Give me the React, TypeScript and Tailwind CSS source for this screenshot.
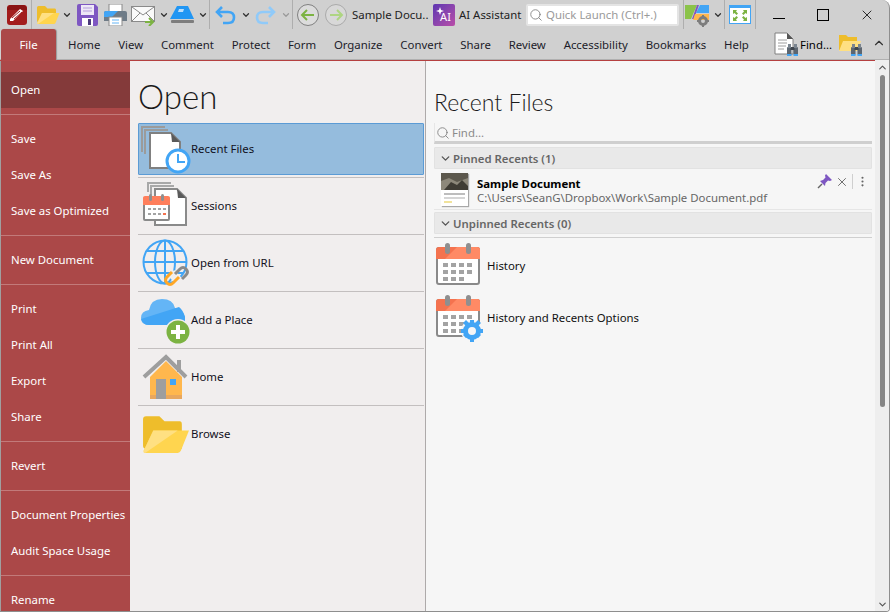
import { ReactNode } from "react";
import { ChevronDown, ChevronUp, Search, X, EllipsisVertical } from "lucide-react";

const tabs = ["Home", "View", "Comment", "Protect", "Form", "Organize", "Convert", "Share", "Review", "Accessibility", "Bookmarks", "Help"];

const groups = [
  ["Open"],
  ["Save", "Save As", "Save as Optimized"],
  ["New Document"],
  ["Print", "Print All", "Export", "Share"],
  ["Revert"],
  ["Document Properties", "Audit Space Usage"],
  ["Rename"],
];

const Sep = ({ ml = 0 }: { ml?: number }) => (
  <div className="w-px h-[29px] bg-[#aeaeae] shrink-0" style={{ marginLeft: ml }} />
);

const Drop = ({ ml, light }: { ml: number; light?: boolean }) => (
  <ChevronDown
    size={10}
    strokeWidth={3}
    className={`shrink-0 ${light ? "text-[#9a9a9a]" : "text-[#333]"}`}
    style={{ marginLeft: ml }}
  />
);

const Ico = ({ w, h, ml = 0, children }: { w: number; h: number; ml?: number; children: ReactNode }) => (
  <svg width={w} height={h} viewBox={`0 0 ${w} ${h}`} className="shrink-0 block" style={{ marginLeft: ml }}>
    {children}
  </svg>
);

const FolderYellow = ({ w = 24, h = 20, ml = 0 }: { w?: number; h?: number; ml?: number }) => (
  <svg width={w} height={h} viewBox="0 0 24 20" className="shrink-0 block" style={{ marginLeft: ml }}>
    <path d="M1 2.500Q1 1 2.500 1H9l2.500 2.500H19Q20 3.500 20 5V17H2.500Q1 17 1 15.500Z" fill="#eebd2b" />
    <path d="M6 8H23.500L19.500 18Q19 19 18 19H2Q1 19 1.300 18Z" fill="#ffd54f" />
    <path d="M6 8H18L2 19Q1 19 1.300 18Z" fill="#ffe082" />
  </svg>
);

const Calendar = ({ gear }: { gear?: boolean }) => (
  <svg width="48" height="48" viewBox="0 0 48 48" className="block shrink-0">
    <rect x="2" y="6" width="42" height="36" rx="2" fill="#fff" stroke="#8a8a8a" strokeWidth="2" />
    <path d="M1 17V8Q1 5 4 5H42Q45 5 45 8V17Z" fill="#f4734f" />
    <path d="M22 5H42Q45 5 45 8V17H10Z" fill="#ff8a65" />
    <rect x="10" y="1" width="5" height="11" rx="2.500" fill="#8f8f8f" />
    <rect x="31" y="1" width="5" height="11" rx="2.500" fill="#8f8f8f" />
    <path
      d="M8 21h5v4H8zM16 21h5v4h-5zM24 21h5v4h-5zM32 21h5v4h-5zM8 28h5v4H8zM16 28h5v4h-5zM24 28h5v4h-5zM32 28h5v4h-5zM8 35h5v4H8zM16 35h5v4h-5zM24 35h5v4h-5z"
      fill="#a3a3a3"
    />
    {gear && (
      <g>
        <circle cx="37" cy="37" r="11" fill="#f6f6f6" />
        <circle cx="37" cy="37" r="6.500" fill="none" stroke="#42a5f5" strokeWidth="5" />
        <path
          d="M35 26h4v4h-4zM35 44h4v4h-4zM26 35h4v4h-4zM44 35h4v4h-4zM28 29l3-3 3 3-3 3zM40 41l3-3 3 3-3 3zM40 29l3-3 3 3-3 3zM28 41l3-3 3 3-3 3z"
          fill="#42a5f5"
        />
      </g>
    )}
  </svg>
);

const Binoculars = ({ x, y }: { x: number; y: number }) => (
  <g transform={`translate(${x} ${y})`}>
    <rect x="0" y="3" width="4.500" height="8" rx="1" fill="#5d6670" />
    <rect x="6.500" y="3" width="4.500" height="8" rx="1" fill="#5d6670" />
    <rect x="3.500" y="3" width="4" height="3" fill="#3f464e" />
    <rect x="1" y="0" width="3" height="4" fill="#7b8590" />
    <rect x="7" y="0" width="3" height="4" fill="#7b8590" />
    <rect x="0" y="10" width="4.500" height="2" fill="#42a5f5" />
    <rect x="6.500" y="10" width="4.500" height="2" fill="#42a5f5" />
  </g>
);

function Toolbar() {
  return (
    <div className="h-[29px] flex items-center shrink-0 pl-[7px] text-[#222]">
      {/* app logo */}
      <Ico w={20} h={20}>
        <rect x="0" y="0" width="20" height="20" rx="3" fill="#a31d1d" />
        <path d="M0 5Q0 0 5 0H15Q20 0 20 5Z" fill="#8a1414" />
        <path d="M3 14L13 4l3 2L6 16H3Z" fill="#fff" />
        <path d="M5 13l8-7M7 14l8-7M3 17h12" stroke="#a31d1d" strokeWidth="1" fill="none" />
      </Ico>
      <Sep ml={4} />
      <FolderYellow ml={4} />
      <Drop ml={2} />
      {/* save */}
      <Ico w={23} h={22} ml={4}>
        <path d="M1 2Q1 0 3 0H19L22 3V20Q22 22 20 22H3Q1 22 1 20Z" fill="#7e57c2" />
        <rect x="5" y="1" width="13" height="10" fill="#ede7f6" />
        <path d="M7 4h9M7 7h9" stroke="#b39ddb" strokeWidth="1" />
        <rect x="6" y="14" width="11" height="8" fill="#fff" />
        <rect x="12" y="15" width="3" height="6" fill="#4a3a7a" />
      </Ico>
      {/* print */}
      <Ico w={23} h={22} ml={5}>
        <rect x="5" y="0" width="13" height="8" fill="#fff" stroke="#888" />
        <path d="M2 7H21Q23 7 23 9V17H0V9Q0 7 2 7Z" fill="#6e7b87" />
        <path d="M2 7H14L8 13H0V9Q0 7 2 7Z" fill="#42a5f5" />
        <rect x="5" y="13" width="13" height="9" fill="#fff" stroke="#888" />
        <path d="M8 16h7M8 19h7" stroke="#64b5f6" strokeWidth="1" />
      </Ico>
      {/* email */}
      <Ico w={26} h={22} ml={4}>
        <rect x="0.500" y="2.500" width="23" height="15" fill="#fafafa" stroke="#8a8a8a" />
        <path d="M1 3l11 8 11-8M1 17l8-8M23 17l-8-8" stroke="#8a8a8a" fill="none" />
        <path d="M14 18h7M18 14l4 4-4 4" stroke="#7cb342" strokeWidth="2" fill="none" />
      </Ico>
      <Drop ml={2} />
      {/* stamp */}
      <Ico w={25} h={18} ml={1}>
        <path d="M7 0H18L24 13H0Z" fill="#2196f3" />
        <path d="M9 3H14L13 6H8Z" fill="#bbdefb" />
        <rect x="1" y="14" width="23" height="3" rx="1" fill="#7d7d7d" />
      </Ico>
      <Drop ml={3} />
      <Sep ml={1} />
      {/* undo */}
      <Ico w={21} h={20} ml={5}>
        <path d="M7 2L2 7l5 5" stroke="#42a5f5" strokeWidth="2.600" fill="none" />
        <path d="M2 7H13Q19 7 19 12.500T13 18H8" stroke="#42a5f5" strokeWidth="2.600" fill="none" />
      </Ico>
      <Drop ml={5} />
      {/* redo */}
      <Ico w={21} h={20} ml={4}>
        <path d="M14 2l5 5-5 5" stroke="#90caf9" strokeWidth="2.600" fill="none" />
        <path d="M19 7H8Q2 7 2 12.500T8 18H13" stroke="#90caf9" strokeWidth="2.600" fill="none" />
      </Ico>
      <Drop ml={5} light />
      <Sep ml={1} />
      {/* back / forward */}
      <Ico w={22} h={22} ml={4}>
        <circle cx="11" cy="11" r="10.500" fill="#dcdcdc" stroke="#808080" />
        <path d="M17 11H6M10 6l-5 5 5 5" stroke="#7cb342" strokeWidth="2" fill="none" />
      </Ico>
      <Ico w={22} h={22} ml={6}>
        <circle cx="11" cy="11" r="10.500" fill="#d8d8d8" stroke="#aaa" />
        <path d="M5 11h11M12 6l5 5-5 5" stroke="#aed581" strokeWidth="2" fill="none" />
      </Ico>
      <span className="ml-[5px] w-[76px] shrink-0 whitespace-nowrap">Sample Docu..</span>
      {/* AI */}
      <div className="ml-[5px] w-[22px] h-[22px] shrink-0 rounded-[2px] bg-gradient-to-br from-[#5e35b1] to-[#ba4ca8] text-white text-[11px] leading-none flex items-center justify-center pt-[3px] pl-[3px] relative">
        AI
        <svg width="8" height="8" viewBox="0 0 8 8" className="absolute left-[3px] top-[3px] block">
          <path d="M4 0L5 3 8 4 5 5 4 8 3 5 0 4 3 3Z" fill="#fff" />
        </svg>
      </div>
      <span className="ml-[4px] w-[62px] shrink-0 whitespace-nowrap">AI Assistant</span>
      <div className="ml-[5px] w-[153px] h-[22px] shrink-0 bg-white border-2 border-[#e4e4e4] rounded-[2px] flex items-center pl-[1px] text-[#9a9a9a] whitespace-nowrap">
        <Search size={14} strokeWidth={1.500} className="text-[#808080] shrink-0" />
        <span className="ml-[3px]">Quick Launch (Ctrl+.)</span>
      </div>
      <Sep ml={4} />
      {/* manage tools */}
      <Ico w={26} h={24} ml={1}>
        <path d="M0 2H12L6 16H0Z" fill="#8bc34a" />
        <path d="M12 2h2L9 16H7Z" fill="#7e57c2" />
        <path d="M15 2H24V10H11Z" fill="#42a5f5" />
        <path d="M10 11H24V17H8Z" fill="#ffb74d" />
        <circle cx="18" cy="18" r="3.500" fill="none" stroke="#7d7d7d" strokeWidth="3" />
        <path d="M17 12h2v3h-2zM17 21h2v3h-2zM12 17h3v2h-3zM21 17h3v2h-3z" fill="#7d7d7d" />
      </Ico>
      <Drop ml={2} />
      <Sep ml={1} />
      {/* full screen */}
      <Ico w={22} h={19} ml={4}>
        <rect x="0.500" y="0.500" width="21" height="18" fill="#fff" stroke="#42a5f5" />
        <rect x="0" y="0" width="22" height="3" fill="#42a5f5" />
        <path d="M4 5h4l-1 1.500 2 2-1.500 1.500-2-2L4 9zM18 5h-4l1 1.500-2 2 1.500 1.500 2-2L18 9zM4 16h4l-1-1.500 2-2-1.500-1.500-2 2L4 12zM18 16h-4l1-1.500-2-2 1.500-1.500 2 2L18 12z" fill="#7cb342" />
      </Ico>
      <Sep ml={4} />
      {/* window buttons */}
      <div className="ml-[17px] w-[12px] h-px bg-black mt-[7px] shrink-0" />
      <div className="ml-[32px] w-[12px] h-[12px] border border-black shrink-0 mt-[1px]" />
      <X size={16} strokeWidth={1.200} className="ml-[30px] shrink-0 text-black" />
    </div>
  );
}

function TabRow() {
  return (
    <div className="h-[31px] flex shrink-0 pl-px border-b border-[#b0b0b0]">
      <div className="w-[55px] shrink-0 h-[31px] bg-[#ab4848] text-white rounded-t-[3px] flex items-center justify-center shadow-[1px_0_1px_#9a9a9a] z-10 pt-px">
        File
      </div>
      <div className="flex items-center gap-[17.8px] ml-[12px] pt-[2px] text-[#1c1c2a] whitespace-nowrap">
        {tabs.map((t) => (
          <span key={t}>{t}</span>
        ))}
      </div>
      {/* find tools */}
      <div className="flex items-center ml-auto pr-[3px] whitespace-nowrap">
        <Ico w={24} h={25}>
          <path d="M1 1H13L19 7V22H1Z" fill="#fff" stroke="#808080" />
          <path d="M13 1L19 7H13Z" fill="#555" />
          <path d="M4 8h9M4 11h9M4 14h8M4 17h6" stroke="#9e9e9e" strokeWidth="1" />
          <Binoculars x={13} y={12} />
        </Ico>
        <span className="ml-[2px] w-[33px] pt-[2px]">Find...</span>
        <svg width="24" height="25" viewBox="0 0 24 25" className="ml-[5px] shrink-0 block">
          <path d="M1 3H8L10 5H19V18H1Z" fill="#eebd2b" />
          <path d="M5 9H23L19 19H1Z" fill="#ffe082" />
          <Binoculars x={13} y={12} />
        </svg>
        <ChevronUp size={14} strokeWidth={2} className="ml-[10px] mb-[2px] text-[#333]" />
      </div>
    </div>
  );
}

function Sidebar() {
  return (
    <div className="w-[130px] shrink-0 bg-[#ab4848] text-white pt-[11px] overflow-hidden border-l border-[#a0a0a0]">
      {groups.map((g, i) => (
        <div key={i}>
          {i > 0 && <div className="h-px bg-[#c27a7a] my-[6px]" />}
          {g.map((item) => (
            <div
              key={item}
              className={`h-[36px] flex items-center pl-[10px] whitespace-nowrap ${item === "Open" ? "bg-[#843a3a]" : ""}`}
            >
              {item}
            </div>
          ))}
        </div>
      ))}
    </div>
  );
}

const openItems: { label: string; icon: ReactNode; active?: boolean }[] = [
  {
    label: "Recent Files",
    active: true,
    icon: (
      <svg width="50" height="50" viewBox="0 0 50 50" className="block">
        <path d="M1 28V3H24M4 30V6H27" stroke="#9b9b9b" strokeWidth="2" fill="none" />
        <path d="M9 9H30L39 18V44H9Z" fill="#fff" stroke="#808080" strokeWidth="2" />
        <path d="M30 9L39 18H31Z" fill="#5a5a5a" />
        <circle cx="37" cy="37" r="11" fill="#fff" stroke="#42a5f5" strokeWidth="3" />
        <path d="M37 30V38H44" stroke="#42a5f5" strokeWidth="2" fill="none" />
      </svg>
    ),
  },
  {
    label: "Sessions",
    icon: (
      <svg width="50" height="50" viewBox="0 0 50 50" className="block">
        <path d="M7 11V2H30M10 14V5H33" stroke="#a8a8a8" strokeWidth="2" fill="none" />
        <path d="M14 8H36L45 17V44H14Z" fill="#fff" stroke="#8a8a8a" strokeWidth="2" />
        <path d="M36 8L45 17H37Z" fill="#5a5a5a" />
        <rect x="3" y="17" width="25" height="22" rx="1" fill="#fff" stroke="#8a8a8a" strokeWidth="2" />
        <path d="M2 24V17Q2 15 4 15H27Q29 15 29 17V24Z" fill="#ff7f5c" />
        <rect x="8" y="13" width="3" height="7" rx="1.500" fill="#8f8f8f" />
        <rect x="20" y="13" width="3" height="7" rx="1.500" fill="#8f8f8f" />
        <path d="M7 27h3v2H7zM12 27h3v2h-3zM17 27h3v2h-3zM22 27h3v2h-3zM7 32h3v2H7zM12 32h3v2h-3zM17 32h3v2h-3z" fill="#a3a3a3" />
        <rect x="22" y="32" width="3" height="2" fill="#f4734f" />
      </svg>
    ),
  },
  {
    label: "Open from URL",
    icon: (
      <svg width="50" height="50" viewBox="0 0 50 50" className="block">
        <g stroke="#42a5f5" strokeWidth="2" fill="none">
          <circle cx="24" cy="24" r="21.500" />
          <ellipse cx="24" cy="24" rx="10" ry="21.500" />
          <path d="M24 2.500V45.500M3 24H45M6 13H42M6 35H42" />
        </g>
        <path d="M31 42L37 36" stroke="#f1eeee" strokeWidth="11" />
        <path d="M34 36l5-5q3-3 6 0t0 6l-4 4" stroke="#8a8a8a" strokeWidth="3" fill="none" />
        <path d="M38 39l-6 6q-3 3-6 0t0-6l5-5" stroke="#ffa726" strokeWidth="3" fill="none" />
      </svg>
    ),
  },
  {
    label: "Add a Place",
    icon: (
      <svg width="50" height="50" viewBox="0 0 50 50" className="block">
        <path d="M8 30Q0 30 0 23T8 15Q10 4 21 4T34 13Q42 14 44 22V30Z" fill="#64b5f6" />
        <path d="M0 24L38 12Q42 15 44 22V30H8Q2 30 0 24Z" fill="#42a5f5" />
        <circle cx="37" cy="37" r="13" fill="#f1eeee" />
        <circle cx="37" cy="37" r="11.500" fill="#7cb342" />
        <path d="M37 30V44M30 37H44" stroke="#fff" strokeWidth="4" />
      </svg>
    ),
  },
  {
    label: "Home",
    icon: (
      <svg width="50" height="50" viewBox="0 0 50 50" className="block">
        <path d="M9 25L25 9L41 25V46Q41 47 40 47H10Q9 47 9 46Z" fill="#ffb74d" />
        <rect x="9" y="43" width="32" height="4" fill="#e8a75e" />
        <path d="M3 25L25 5L45 25" stroke="#9e9e9e" strokeWidth="4" fill="none" />
        <rect x="36" y="8" width="4" height="12" fill="#9e9e9e" />
        <rect x="15" y="27" width="10" height="20" fill="#9e9e9e" />
        <rect x="29" y="27" width="6" height="6" fill="#42a5f5" />
      </svg>
    ),
  },
  {
    label: "Browse",
    icon: <FolderYellow w={49} h={41} />,
  },
];

function OpenPanel() {
  return (
    <div className="w-[296px] shrink-0 bg-[#f1eeee] border-r border-[#aeaaaa] pl-[8px] pr-px text-[#111122]">
      <h1 className="h-[62px] text-[33px] leading-[48px] pt-[11px] font-light text-[#1a1a1a] font-['Lato',sans-serif]">
        Open
      </h1>
      {openItems.map((it, i) => (
        <div key={it.label}>
          {i > 0 && <div className="h-px bg-[#c3bfbf] my-[2px]" />}
          <div
            className={`h-[52px] flex items-center border rounded-[1px] ${
              it.active ? "bg-[#95bcdd] border-[#5b9bd5]" : "border-transparent"
            }`}
          >
            <div className="w-[52px] h-[50px] shrink-0 flex items-center justify-center pl-[1px]">{it.icon}</div>
            <span>{it.label}</span>
          </div>
        </div>
      ))}
    </div>
  );
}

function RecentHeader({ label }: { label: string }) {
  return (
    <div className="h-[22px] bg-[#e9e9e9] border border-[#e2e2e2] rounded-[1px] flex items-center pl-[4px] pt-px font-semibold text-[#666]">
      <ChevronDown size={13} strokeWidth={2.500} className="text-[#555] mr-[1px]" />
      {label}
    </div>
  );
}

function RecentPanel() {
  return (
    <div className="flex-1 bg-[#f6f6f6] flex min-w-0">
      <div className="w-[438px] ml-[8px] shrink-0 text-[#111]">
        <h2 className="h-[62px] text-[23px] leading-[32px] pt-[25px] font-light text-[#1a1a1a] font-['Lato',sans-serif]">
          Recent Files
        </h2>
        <div className="h-[21px] flex items-center pl-px pt-[2px] border-l border-[#e6e6e6] border-b-[3px] border-b-[#cfcfcf] text-[#8a8a8a] mb-[3px]">
          <Search size={14} strokeWidth={1.500} className="text-[#808080]" />
          <span className="ml-[2px]">Find...</span>
        </div>
        <RecentHeader label="Pinned Recents (1)" />
        <div className="h-[40px] mt-px border-b border-[#e6e6e6] flex items-center relative">
          {/* doc thumbnail */}
          <div className="ml-[7px] w-[27px] h-[33px] bg-white shadow-[1px_1px_1px_#a8a8a8] shrink-0">
            <svg width="27" height="17" viewBox="0 0 27 17" className="block">
              <rect width="27" height="17" fill="#8d887a" />
              <path d="M0 0H27V5L16 9 8 5 0 8Z" fill="#5c584d" />
              <path d="M3 17L10 9l6 3 5-5 6 6V17Z" fill="#3f3c34" />
            </svg>
            <div className="mt-[3px] mx-[3px] h-[2px] bg-[#bdbdbd]" />
            <div className="mt-[2px] mx-[3px] h-[2px] bg-[#d5d5d5]" />
            <div className="mt-[2px] mx-[3px] w-[8px] h-[2px] bg-[#f1e39c]" />
          </div>
          <div className="ml-[9px] pt-[2px] leading-[14px] whitespace-nowrap">
            <div className="font-bold text-black">Sample Document</div>
            <div className="text-[#666]">C:\Users\SeanG\Dropbox\Work\Sample Document.pdf</div>
          </div>
          <div className="absolute right-[3px] top-[4px] flex items-center text-[#666]">
            <svg width="15" height="15" viewBox="0 0 15 15" className="block">
              <path d="M9 0L15 6l-2 1-2-.500-2.500 2.500L8 12 3 7l3-1 2.500-2.500L8 1.500Z" fill="#7e57c2" />
              <path d="M5 10L1 14" stroke="#666" strokeWidth="1.500" />
            </svg>
            <X size={14} strokeWidth={1.600} className="ml-[3px]" />
            <div className="w-px h-[15px] bg-[#cfcfcf] ml-[3px]" />
            <EllipsisVertical size={13} strokeWidth={2} className="ml-[3px]" />
          </div>
        </div>
        <div className="h-[2px]" />
        <RecentHeader label="Unpinned Recents (0)" />
        <div className="h-px bg-[#cfcfcf] mt-[3px]" />
        <div className="h-[52px] mt-[2px] flex items-center pl-px">
          <Calendar />
          <span className="ml-[4px]">History</span>
        </div>
        <div className="h-[52px] flex items-center pl-px">
          <Calendar gear />
          <span className="ml-[4px]">History and Recents Options</span>
        </div>
      </div>
      {/* scrollbar */}
      <div className="ml-auto -mt-px z-10 w-[14px] bg-[#eeeeee] flex flex-col items-center justify-between pt-[2px] pb-px text-[#555]">
        <div className="flex flex-col items-center w-full">
          <ChevronUp size={11} strokeWidth={2.500} />
          <div className="w-[5px] h-[332px] rounded-full bg-[#858585] mt-[2px]" />
        </div>
        <ChevronDown size={11} strokeWidth={2.500} />
      </div>
    </div>
  );
}

export default function App() {
  return (
    <div className="w-[890px] h-[612px] overflow-hidden flex flex-col bg-[#d0d0d0] text-[11.4px] leading-[16px] border-r border-b border-[#8e8e8e] rounded-tr-[8px] rounded-br-[4px] font-['Noto_Sans',sans-serif]">
      <Toolbar />
      <TabRow />
      <div className="flex-1 flex min-h-0 border-t border-[#b54040] ml-0">
        <Sidebar />
        <OpenPanel />
        <RecentPanel />
      </div>
    </div>
  );
}
